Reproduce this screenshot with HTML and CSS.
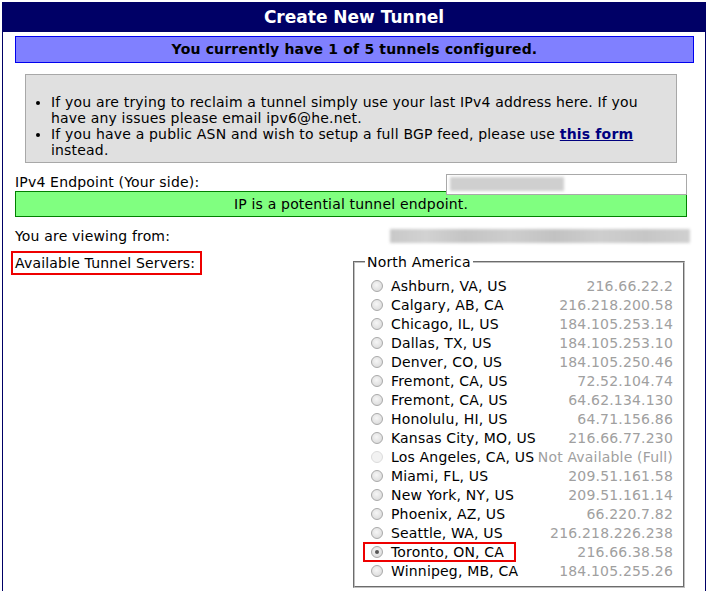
FILE: index.html
```html
<!DOCTYPE html>
<html>
<head>
<meta charset="utf-8">
<title>Create New Tunnel</title>
<link rel="stylesheet" href="styles.css">
</head>
<body>
<div class="page">
  <div class="header">Create New Tunnel</div>
  <div class="banner">You currently have 1 of 5 tunnels configured.</div>
  <div class="info">
    <ul>
      <li>If you are trying to reclaim a tunnel simply use your last IPv4 address here. If you have any issues please email ipv6@he.net.</li>
      <li>If you have a public ASN and wish to setup a full BGP feed, please use <a href="#" class="link">this form</a> instead.</li>
    </ul>
  </div>
  <div class="endpoint-row">
    <span class="label">IPv4 Endpoint (Your side):</span>
    <div class="ipbox"><span class="blur-short"></span></div>
  </div>
  <div class="okbar">IP is a potential tunnel endpoint.</div>
  <div class="view-row">
    <span class="label">You are viewing from:</span>
    <span class="blur-long"></span>
  </div>
  <div class="servers">
    <div class="servers-label"><span class="redbox">Available Tunnel Servers:</span></div>
    <fieldset class="region">
      <legend>North America</legend>
      <div class="row"><span class="opt"><span class="radio"></span>Ashburn, VA, US</span><span class="ip">216.66.22.2</span></div>
      <div class="row"><span class="opt"><span class="radio"></span>Calgary, AB, CA</span><span class="ip">216.218.200.58</span></div>
      <div class="row"><span class="opt"><span class="radio"></span>Chicago, IL, US</span><span class="ip">184.105.253.14</span></div>
      <div class="row"><span class="opt"><span class="radio"></span>Dallas, TX, US</span><span class="ip">184.105.253.10</span></div>
      <div class="row"><span class="opt"><span class="radio"></span>Denver, CO, US</span><span class="ip">184.105.250.46</span></div>
      <div class="row"><span class="opt"><span class="radio"></span>Fremont, CA, US</span><span class="ip">72.52.104.74</span></div>
      <div class="row"><span class="opt"><span class="radio"></span>Fremont, CA, US</span><span class="ip">64.62.134.130</span></div>
      <div class="row"><span class="opt"><span class="radio"></span>Honolulu, HI, US</span><span class="ip">64.71.156.86</span></div>
      <div class="row"><span class="opt"><span class="radio"></span>Kansas City, MO, US</span><span class="ip">216.66.77.230</span></div>
      <div class="row"><span class="opt"><span class="radio disabled"></span>Los Angeles, CA, US</span><span class="ip">Not Available (Full)</span></div>
      <div class="row"><span class="opt"><span class="radio"></span>Miami, FL, US</span><span class="ip">209.51.161.58</span></div>
      <div class="row"><span class="opt"><span class="radio"></span>New York, NY, US</span><span class="ip">209.51.161.14</span></div>
      <div class="row"><span class="opt"><span class="radio"></span>Phoenix, AZ, US</span><span class="ip">66.220.7.82</span></div>
      <div class="row"><span class="opt"><span class="radio"></span>Seattle, WA, US</span><span class="ip">216.218.226.238</span></div>
      <div class="row"><span class="opt selected"><span class="radio checked"></span>Toronto, ON, CA</span><span class="ip">216.66.38.58</span></div>
      <div class="row"><span class="opt"><span class="radio"></span>Winnipeg, MB, CA</span><span class="ip">184.105.255.26</span></div>
    </fieldset>
  </div>
</div>
</body>
</html>
```

FILE: styles.css
```css
html, body {
  margin: 0;
  padding: 0;
  background: #ffffff;
}
body {
  padding: 2px;
  font-family: "DejaVu Sans", sans-serif;
  font-size: 14px;
  letter-spacing: 0.18px;
  color: #000;
}
.page {
  width: 704px;
  box-sizing: border-box;
  border: 1px solid #000066;
  padding-bottom: 20px;
}
.header {
  height: 29px;
  line-height: 29px;
  background: #000066;
  color: #fff;
  font-weight: bold;
  font-size: 17px;
  letter-spacing: 0;
  text-align: center;
}
.banner {
  margin: 4px 0 0 12px;
  width: 679px;
  height: 27px;
  box-sizing: border-box;
  background: #8080ff;
  border: 1px solid #0000ee;
  font-weight: bold;
  text-align: center;
  line-height: 25px;
}
.info {
  margin: 11px 0 0 22px;
  width: 652px;
  height: 89px;
  box-sizing: border-box;
  background: #e0e0e0;
  border: 1px solid #a8a8a8;
  padding: 19px 21px 4px 0;
  line-height: 16px;
}
.info ul {
  margin: 0;
  padding-left: 25px;
}
.link {
  color: #00007f;
  font-weight: bold;
  text-decoration: underline;
}
.endpoint-row {
  margin: 10px 0 0 12px;
  width: 672px;
  height: 18px;
  display: flex;
  justify-content: space-between;
  align-items: flex-start;
  line-height: 18px;
}
.ipbox {
  position: relative;
  margin-top: 1px;
  width: 241px;
  height: 21px;
  box-sizing: border-box;
  background: #fff;
  border: 1px solid #a9a9a9;
  padding: 2px 3px;
}
.blur-short {
  display: block;
  width: 114px;
  height: 14px;
  background: #cfcfcf;
  filter: blur(1.5px);
}
.okbar {
  margin-left: 12px;
  width: 672px;
  height: 26px;
  box-sizing: border-box;
  background: #80ff80;
  border: 1px solid #008000;
  text-align: center;
  line-height: 24px;
}
.view-row {
  margin: 11px 0 0 12px;
  height: 16px;
  line-height: 16px;
  display: flex;
  align-items: center;
}
.blur-long {
  display: block;
  margin-left: 220px;
  width: 300px;
  height: 14px;
  background: linear-gradient(90deg, #c8c8c8 0%, #d2d2d2 12%, #c4c4c4 25%, #cdcdcd 40%, #c2c2c2 55%, #cecece 70%, #c6c6c6 85%, #d0d0d0 100%);
  filter: blur(1.5px);
}
.servers {
  margin-top: 7px;
  display: grid;
  grid-template-columns: 350px 332px;
  align-items: start;
}
.servers-label {
  padding-left: 8px;
}
.redbox {
  display: inline-block;
  border: 2px solid #ee0000;
  padding: 2px 5px 2px 2px;
  line-height: 16px;
}
.region {
  margin: 3px 0 0 0;
  width: 332px;
  box-sizing: border-box;
  border: 2px groove #c0c0c0;
  padding: 6px 10px 6px 10px;
  min-width: 0;
}
.region legend {
  padding: 0 2px;
  line-height: 16px;
}
.row {
  display: flex;
  align-items: center;
  height: 19px;
}
.opt {
  display: inline-flex;
  align-items: center;
  height: 16px;
  padding-left: 6px;
  white-space: nowrap;
}
.opt.selected {
  padding-right: 10px;
  outline: 2px solid #ee0000;
}
.radio {
  display: inline-block;
  position: relative;
  width: 12px;
  height: 12px;
  box-sizing: border-box;
  border-radius: 50%;
  border: 1px solid #a9a9a9;
  background: radial-gradient(circle at 45% 40%, #f6f6f6 0%, #e2e2e2 60%, #d2d2d2 100%);
  margin-right: 8px;
  flex: none;
}
.radio.disabled {
  border-color: #dcdcdc;
  background: #f2f2f2;
}
.radio.checked::after {
  content: "";
  position: absolute;
  left: 3px;
  top: 3px;
  width: 4px;
  height: 4px;
  border-radius: 50%;
  background: #555;
}
.ip {
  margin-left: auto;
  color: #a0a0a0;
  white-space: nowrap;
}
```
